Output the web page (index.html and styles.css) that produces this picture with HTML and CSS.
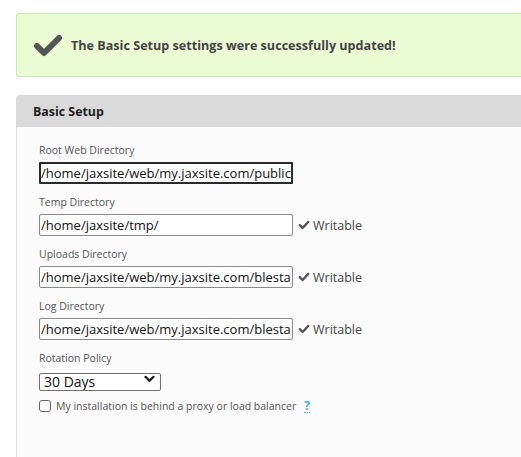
FILE: index.html
```html
<!DOCTYPE html>
<html>
<head>
<meta charset="utf-8">
<link rel="stylesheet" href="styles.css">
</head>
<body>
<div class="page">
  <div class="alert">
    <svg class="alert-icon" width="30" height="24" viewBox="0 0 30 24">
      <path d="M4 12 L11 19 L26 4" fill="none" stroke="#555" stroke-width="6" stroke-linecap="round" stroke-linejoin="round"/>
    </svg>
    <span class="alert-text">The Basic Setup settings were successfully updated!</span>
  </div>

  <div class="panel">
    <div class="panel-head">Basic Setup</div>
    <div class="panel-body">
      <div class="field">
        <label class="field-label">Root Web Directory</label>
        <div class="field-row">
          <input class="text-input focused" type="text" value="/home/jaxsite/web/my.jaxsite.com/public/">
        </div>
      </div>
      <div class="field">
        <label class="field-label">Temp Directory</label>
        <div class="field-row">
          <input class="text-input" type="text" value="/home/jaxsite/tmp/">
          <span class="status"><svg class="status-icon" width="12" height="10" viewBox="0 0 12 10"><path d="M1.8 5.2 L4.6 8 L10.2 2" fill="none" stroke="#555" stroke-width="2.4" stroke-linecap="round" stroke-linejoin="round"/></svg>Writable</span>
        </div>
      </div>
      <div class="field">
        <label class="field-label">Uploads Directory</label>
        <div class="field-row">
          <input class="text-input" type="text" value="/home/jaxsite/web/my.jaxsite.com/blesta_uploads/">
          <span class="status"><svg class="status-icon" width="12" height="10" viewBox="0 0 12 10"><path d="M1.8 5.2 L4.6 8 L10.2 2" fill="none" stroke="#555" stroke-width="2.4" stroke-linecap="round" stroke-linejoin="round"/></svg>Writable</span>
        </div>
      </div>
      <div class="field">
        <label class="field-label">Log Directory</label>
        <div class="field-row">
          <input class="text-input" type="text" value="/home/jaxsite/web/my.jaxsite.com/blesta_logs/">
          <span class="status"><svg class="status-icon" width="12" height="10" viewBox="0 0 12 10"><path d="M1.8 5.2 L4.6 8 L10.2 2" fill="none" stroke="#555" stroke-width="2.4" stroke-linecap="round" stroke-linejoin="round"/></svg>Writable</span>
        </div>
      </div>
      <div class="field">
        <label class="field-label">Rotation Policy</label>
        <div class="field-row">
          <div class="select-wrap">
            <select class="select">
              <option>30 Days</option>
            </select>
            <svg class="select-arrow" width="11" height="8" viewBox="0 0 11 8"><path d="M1.5 1.8 L5.5 5.8 L9.5 1.8" fill="none" stroke="#111" stroke-width="2.2" stroke-linecap="round" stroke-linejoin="round"/></svg>
          </div>
        </div>
      </div>
      <div class="check-row">
        <span class="checkbox"></span>
        <span class="check-label">My installation is behind a proxy or load balancer</span>
        <span class="help">?</span>
      </div>
    </div>
  </div>
</div>
</body>
</html>
```

FILE: styles.css
```css
html, body {
  margin: 0;
  padding: 0;
  background: #ffffff;
  overflow: hidden;
}

body {
  font-family: "Open Sans", "Noto Sans", sans-serif;
  color: #444;
}

.page {
  padding: 13px 0 0 16px;
  width: 560px;
}

.alert {
  display: flex;
  align-items: center;
  height: 62px;
  background: #ebfcd5;
  border: 1px solid #c8eeab;
  border-right: none;
  border-radius: 3px 0 0 3px;
  padding-left: 16px;
}

.alert-icon {
  display: block;
  margin-right: 8px;
  margin-top: 2px;
}

.alert-text {
  font-size: 12.6px;
  font-weight: 700;
  color: #444;
}

.panel {
  margin-top: 18px;
}

.panel-head {
  height: 32px;
  line-height: 33px;
  background: #dadada;
  border-radius: 4px 0 0 0;
  padding-left: 17px;
  font-size: 12.4px;
  font-weight: 700;
  color: #1e1e1e;
}

.panel-body {
  background: #fbfbfb;
  border-left: 1px solid #e2e2e2;
  padding: 15px 0 60px 22px;
}

.field {
  display: flex;
  flex-direction: column;
  margin-bottom: 10px;
}

.field-label {
  font-size: 10.5px;
  line-height: 16px;
  color: #555;
  margin-bottom: 4px;
}

.field-row {
  display: flex;
  align-items: center;
}

.text-input {
  box-sizing: border-box;
  width: 254px;
  height: 22px;
  margin: 0;
  padding: 0 1px;
  border: 1px solid #8a8a8a;
  border-radius: 2px;
  background: #fff;
  font-family: "Open Sans", "Noto Sans", sans-serif;
  font-size: 13px;
  color: #111;
  outline: none;
}

.text-input.focused {
  border: 2px solid #2a2a2a;
  border-radius: 1px;
  padding: 0;
}

.status {
  display: flex;
  align-items: center;
  margin-left: 5px;
  font-size: 12.5px;
  color: #444;
}

.status-icon {
  display: block;
  margin-right: 3px;
}

.select-wrap {
  position: relative;
  width: 122px;
  height: 18px;
}

.select {
  box-sizing: border-box;
  width: 122px;
  height: 18px;
  margin: 0;
  padding: 0 0 0 4px;
  border: 1px solid #707070;
  border-radius: 2px;
  background: #fff;
  font-family: "Open Sans", "Noto Sans", sans-serif;
  font-size: 14px;
  line-height: 16px;
  color: #111;
  -webkit-appearance: none;
  appearance: none;
}

.select-arrow {
  position: absolute;
  right: 6px;
  top: 5px;
  pointer-events: none;
}

.check-row {
  display: flex;
  align-items: center;
  margin-top: 11px;
}

.checkbox {
  box-sizing: border-box;
  width: 12px;
  height: 12px;
  border: 1px solid #666;
  border-radius: 3px;
  background: #fff;
  margin-right: 5px;
}

.check-label {
  font-size: 10.5px;
  color: #555;
}

.help {
  margin-left: 8px;
  font-size: 12px;
  font-weight: 700;
  color: #3ab0e2;
  border-bottom: 1px dotted #3ab0e2;
  line-height: 13px;
}
```
